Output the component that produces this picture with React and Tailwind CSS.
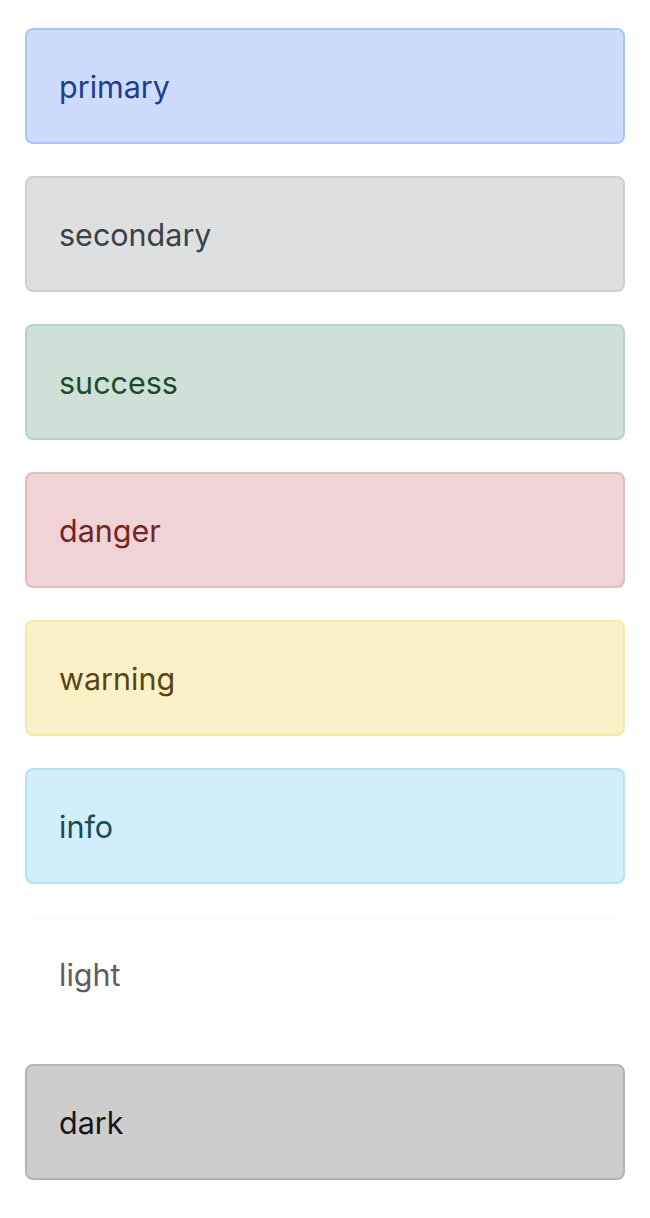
import React from 'react';

const alerts = [
  { name: 'primary', cls: 'bg-[#cddcfd] border-[#a9c5f7] text-[#1f3c8d]' },
  { name: 'secondary', cls: 'bg-[#dedfe1] border-[#cdcfd2] text-[#3d4145]' },
  { name: 'success', cls: 'bg-[#cfe0d8] border-[#b6d3c6] text-[#1e4a2d]' },
  { name: 'danger', cls: 'bg-[#efd3d6] border-[#e7b9bd] text-[#742424]' },
  { name: 'warning', cls: 'bg-[#fbf1c8] border-[#f8e7a8] text-[#5a4512]' },
  { name: 'info', cls: 'bg-[#d1eefa] border-[#b3e3f5] text-[#1c4a56]' },
  { name: 'light', cls: 'bg-[#fdfdfd] border-[#fcfcfc] text-[#5d5e5e]' },
  { name: 'dark', cls: 'bg-[#cdcdcd] border-[#b4b4b4] text-[#161616]' },
];

const App = () => {
  return (
    <div className="min-h-screen bg-white px-[25px] pt-[28px] font-['Inter',sans-serif]">
      <div className="flex flex-col gap-[32px]">
        {alerts.map((a) => (
          <div
            key={a.name}
            className={`border-2 rounded-[8px] p-[32px] text-[30.5px] leading-[48px] ${a.cls}`}
          >
            <span className="relative top-[1px]">{a.name}</span>
          </div>
        ))}
      </div>
    </div>
  );
};

export default App;
